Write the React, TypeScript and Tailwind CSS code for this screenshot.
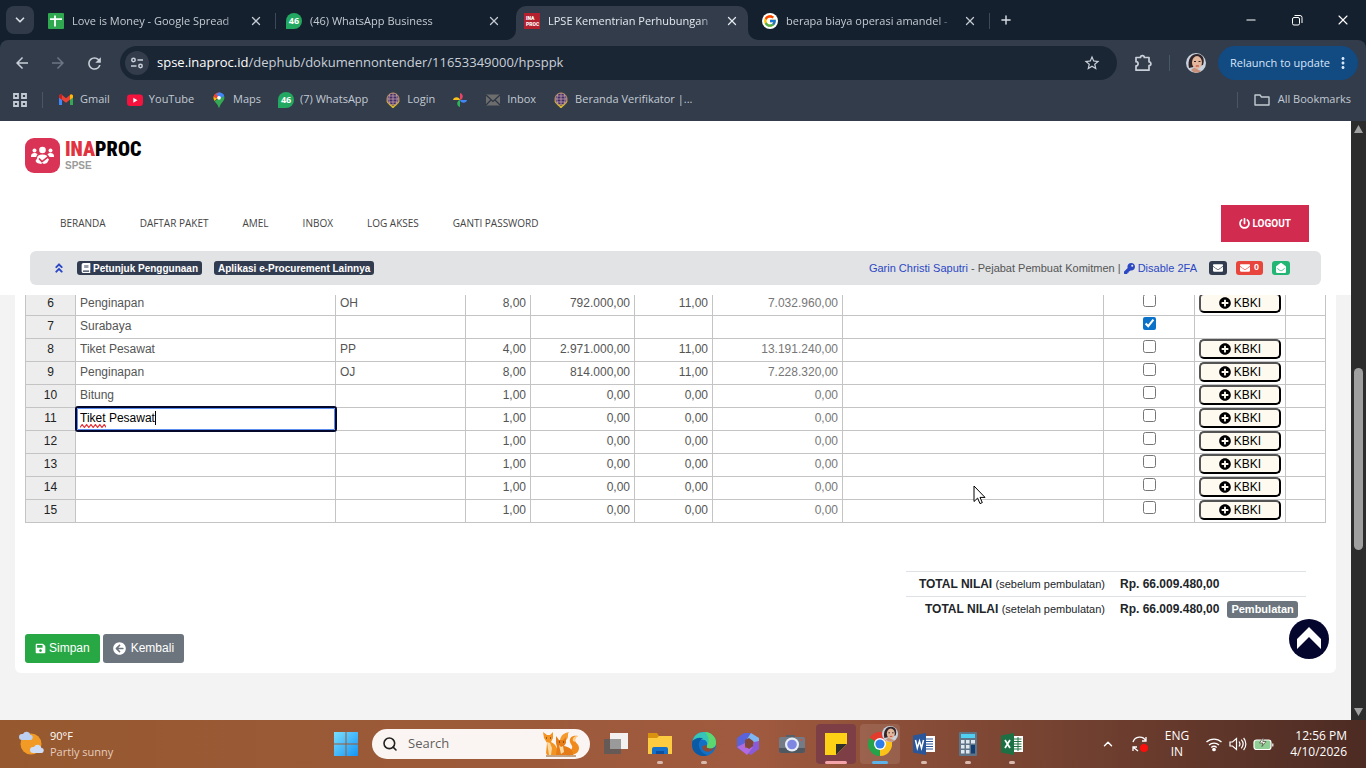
import { ChevronDown, ChevronUp, Minus, Plus, Search, X } from "lucide-react";
import {
  FaAngleDoubleUp,
  FaArrowCircleLeft,
  FaBook,
  FaEnvelope,
  FaEnvelopeOpen,
  FaKey,
  FaPlusCircle,
  FaPowerOff,
  FaSave,
} from "react-icons/fa";
import { FcGoogle } from "react-icons/fc";
import { MdArrowBack, MdArrowForward, MdMoreVert, MdRefresh, MdStarBorder } from "react-icons/md";
import type { ReactNode } from "react";

type Row = {
  no: number;
  name: string;
  unit?: string;
  qty?: string;
  price?: string;
  tax?: string;
  total?: string;
  checked?: boolean;
  editing?: boolean;
};

const rows: Row[] = [
  { no: 6, name: "Penginapan", unit: "OH", qty: "8,00", price: "792.000,00", tax: "11,00", total: "7.032.960,00" },
  { no: 7, name: "Surabaya", checked: true },
  { no: 8, name: "Tiket Pesawat", unit: "PP", qty: "4,00", price: "2.971.000,00", tax: "11,00", total: "13.191.240,00" },
  { no: 9, name: "Penginapan", unit: "OJ", qty: "8,00", price: "814.000,00", tax: "11,00", total: "7.228.320,00" },
  { no: 10, name: "Bitung", qty: "1,00", price: "0,00", tax: "0,00", total: "0,00" },
  { no: 11, name: "Tiket Pesawat", qty: "1,00", price: "0,00", tax: "0,00", total: "0,00", editing: true },
  { no: 12, name: "", qty: "1,00", price: "0,00", tax: "0,00", total: "0,00" },
  { no: 13, name: "", qty: "1,00", price: "0,00", tax: "0,00", total: "0,00" },
  { no: 14, name: "", qty: "1,00", price: "0,00", tax: "0,00", total: "0,00" },
  { no: 15, name: "", qty: "1,00", price: "0,00", tax: "0,00", total: "0,00" },
];

/* ---------- Favicons ---------- */

function SheetsIcon() {
  return (
    <svg viewBox="0 0 16 16" className="size-4 shrink-0">
      <rect width="16" height="16" rx="1" fill="#2fa84f" />
      <path d="M2 6.2h12M7 2.5v11" stroke="#fff" strokeWidth="1.8" />
    </svg>
  );
}

function WhatsAppBadge() {
  return (
    <span className="flex size-4 shrink-0 items-center justify-center rounded-full rounded-bl-sm bg-[#22a860] text-[9px] font-bold text-white">
      46
    </span>
  );
}

function InaprocIcon() {
  return (
    <span className="flex size-4 shrink-0 flex-col items-start justify-center overflow-hidden bg-[#b3202e] px-0.5 font-['Roboto',sans-serif] text-[5px] leading-[6px] font-black text-white">
      <span>INA</span>
      <span>PROC</span>
    </span>
  );
}

function GmailIcon() {
  return (
    <svg viewBox="0 0 16 16" className="size-4 shrink-0">
      <path d="M1 4v9h3V6z" fill="#4285f4" />
      <path d="M12 6v7h3V4z" fill="#34a853" />
      <path d="M1 4.2C1 2.6 2.8 2 4 3l4 3.2L12 3c1.2-1 3-.4 3 1.2V5.600L8 10.800 1 5.600z" fill="#ea4335" />
      <path d="M12 3c1.200-1 3-.4 3 1.200V5.600L12 7.800z" fill="#fbbc04" />
      <path d="M4 3C2.800 2 1 2.600 1 4.200v1.400l3 2.200z" fill="#c5221f" />
    </svg>
  );
}

function YoutubeIcon() {
  return (
    <svg viewBox="0 0 16 16" className="size-4 shrink-0">
      <rect y="2.500" width="16" height="11.500" rx="3" fill="#f5123d" />
      <path d="M6.300 5.700v5l4.200-2.500z" fill="#fff" />
    </svg>
  );
}

function MapsIcon() {
  return (
    <svg viewBox="0 0 16 16" className="size-4 shrink-0">
      <path d="M8 .5a5.500 5.500 0 0 1 5.200 3.700L8 9 5.500 4z" fill="#4285f4" />
      <path d="M3.800 2.500A5.500 5.500 0 0 0 3.500 9L9 4z" fill="#fbbc04" />
      <path d="M8 .5a5.500 5.500 0 0 0-5.400 4.500L6 6.500l3-4z" fill="#ea4335" />
      <path d="M8 .5a5.500 5.500 0 0 1 5.200 3.700L9 6 5 2z" fill="#4285f4" />
      <path d="M13.200 4.200C14.500 9 9.500 10.500 8.500 15.500h-1C7 12.500 5 11.500 3.500 9z" fill="#34a853" />
      <circle cx="8" cy="5.800" r="1.900" fill="#fff" />
    </svg>
  );
}

function GlobeIcon() {
  return (
    <svg viewBox="0 0 16 16" className="size-4 shrink-0" fill="none">
      <path d="M2 8.500C3 12 5.500 12.500 8 15.500c2.500-3 5-3.500 6-7" stroke="#d8b92c" strokeWidth="1.600" />
      <circle cx="8" cy="7" r="6" fill="#3d2c66" stroke="#c79a6b" />
      <path d="M2 7h12M3.500 4h9M3.500 10h9M8 1v12M5 2c-1.500 3-1.500 7 0 10M11 2c1.500 3 1.500 7 0 10" stroke="#c9a0a8" strokeWidth=".8" />
    </svg>
  );
}

function PhotosIcon() {
  return (
    <svg viewBox="0 0 16 16" className="size-4 shrink-0">
      <path d="M8 8V1a3.600 3.600 0 0 1 0 7" fill="#ea4365" />
      <path d="M8 8h7a3.600 3.600 0 0 1-7 0" fill="#4285f4" />
      <path d="M8 8v7a3.600 3.600 0 0 1 0-7" fill="#2fb457" />
      <path d="M8 8H1a3.600 3.600 0 0 1 7 0" fill="#fbc116" />
    </svg>
  );
}

function MailIcon() {
  return (
    <svg viewBox="0 0 16 16" className="size-4 shrink-0">
      <path d="M1 2.500h14v11H1z" fill="#6d6d6d" />
      <path d="M1 3l7 6.500L15 3M1 13l5-5M15 13l-5-5" fill="none" stroke="#2b3544" strokeWidth="1.200" />
    </svg>
  );
}

function Avatar() {
  return (
    <svg viewBox="0 0 20 20" className="size-5 shrink-0">
      <circle cx="10" cy="10" r="10" fill="#c9d3df" />
      <path d="M3 15C1 7 5 1 11 1s8 5 6 11z" fill="#33262a" />
      <ellipse cx="11" cy="9.500" rx="5" ry="6.500" fill="#e3b79c" />
      <path d="M5 17c2-2 3-3 6-1s4 1 4 2c-3 2.500-7 2.500-10-1" fill="#c9917a" />
      <path d="M8 8.500h2M12.500 8.500h2" stroke="#3a2620" strokeWidth="1.100" />
      <path d="M9.800 13h3" stroke="#c2453f" strokeWidth="1.200" />
    </svg>
  );
}

/* ---------- Browser ---------- */

function Tab({ icon, title, active }: { icon: ReactNode; title: string; active?: boolean }) {
  return (
    <div
      className={
        active
          ? "relative flex w-[232px] min-w-0 items-center gap-2 rounded-t-[10px] bg-[#323c4b] px-2 pb-1 text-[#e4e9ef]"
          : "flex w-[232px] min-w-0 items-center gap-2 px-2 pb-1 text-[#c3cad3]"
      }
    >
      {active && (
        <>
          <svg viewBox="0 0 10 10" className="absolute bottom-0 -left-2.5 size-2.5" fill="#323c4b">
            <path d="M10 0v10H0A10 10 0 0 0 10 0" />
          </svg>
          <svg viewBox="0 0 10 10" className="absolute -right-2.5 bottom-0 size-2.5" fill="#323c4b">
            <path d="M0 0v10h10A10 10 0 0 1 0 0" />
          </svg>
        </>
      )}
      {icon}
      <span className="flex-1 overflow-hidden mask-r-from-90% text-[11px] whitespace-nowrap">{title}</span>
      <button aria-label="Close tab" className="flex size-4 items-center justify-center">
        <X className="size-3.5" strokeWidth={2.200} />
      </button>
    </div>
  );
}

function TabLine({ hidden }: { hidden?: boolean }) {
  return (
    <div className="flex w-1.5 shrink-0 items-center justify-center pb-1">
      {!hidden && <div className="h-4 w-px bg-[#3d4858]" />}
    </div>
  );
}

function TabStrip() {
  return (
    <div className="flex h-10 bg-[#14202e] pt-1.5 text-[#d5dbe3]">
      <button aria-label="Search tabs" className="mx-1.5 flex size-7 shrink-0 items-center justify-center rounded-lg bg-[#303a49]">
        <ChevronDown className="size-3.5" strokeWidth={3} />
      </button>
      <div className="flex min-w-0">
        <Tab icon={<SheetsIcon />} title="Love is Money - Google Spread" />
        <TabLine />
        <Tab icon={<WhatsAppBadge />} title="(46) WhatsApp Business" />
        <TabLine hidden />
        <Tab icon={<InaprocIcon />} title="LPSE Kementrian Perhubungan" active />
        <TabLine hidden />
        <Tab
          icon={
            <span className="flex size-4 shrink-0 items-center justify-center rounded-full bg-white">
              <FcGoogle className="size-3.5" />
            </span>
          }
          title="berapa biaya operasi amandel -"
        />
        <TabLine />
      </div>
      <button aria-label="New tab" className="flex size-7 shrink-0 items-center justify-center">
        <Plus className="size-3.5" strokeWidth={2.500} />
      </button>
      <div className="-mt-1.5 ml-auto flex text-white">
        <button aria-label="Minimize" className="flex w-[46px] items-center justify-center">
          <Minus className="size-3.5" strokeWidth={2} />
        </button>
        <button aria-label="Restore" className="flex w-[46px] items-center justify-center">
          <svg viewBox="0 0 12 12" className="size-3" fill="none" stroke="currentColor">
            <rect x="1.500" y="3.500" width="7" height="7.500" rx="1.500" />
            <path d="M3.500 1.500H9a2 2 0 0 1 2 2V9" />
          </svg>
        </button>
        <button aria-label="Close" className="flex w-[46px] items-center justify-center">
          <X className="size-4" strokeWidth={1.600} />
        </button>
      </div>
    </div>
  );
}

function Toolbar() {
  return (
    <div className="flex h-[46px] items-center rounded-t-lg bg-[#323c4b] pr-2 pl-1 text-[#c9d0d9]">
      <button aria-label="Back" className="flex w-9 justify-center">
        <MdArrowBack className="size-[18px]" />
      </button>
      <button aria-label="Forward" className="flex w-9 justify-center text-[#6c7584]">
        <MdArrowForward className="size-[18px]" />
      </button>
      <button aria-label="Reload" className="flex w-9 justify-center">
        <MdRefresh className="size-[19px]" />
      </button>
      <div className="ml-2 flex h-[34px] flex-1 items-center rounded-full bg-[#1b2634] pr-4 pl-[5px]">
        <span className="flex size-6 items-center justify-center rounded-full bg-[#323c4b]">
          <svg viewBox="0 0 14 14" className="size-3.5" fill="none" stroke="currentColor" strokeWidth="1.500">
            <circle cx="3.500" cy="4" r="1.700" />
            <circle cx="10.500" cy="10" r="1.700" />
            <path d="M7.500 4H13M1 10h5.500" />
          </svg>
        </span>
        <p className="ml-2 flex-1 text-[13px] whitespace-nowrap">
          <span className="text-white">spse.inaproc.id</span>/dephub/dokumennontender/11653349000/hpsppk
        </p>
        <button aria-label="Bookmark this tab">
          <MdStarBorder className="size-[18px]" />
        </button>
      </div>
      <button aria-label="Extensions" className="ml-4 flex w-5 justify-center">
        <svg viewBox="0 0 18 18" className="size-[18px]" fill="none" stroke="currentColor" strokeWidth="1.700">
          <path
            d="M2 3.500h4.500a1.900 1.900 0 0 1 3.800 0H15V7.800a1.900 1.900 0 0 1 0 3.800V16.200H2v-4.300a2.100 2.100 0 0 0 0-4.200z"
            strokeLinejoin="round"
          />
        </svg>
      </button>
      <div className="mx-4 h-4 w-px bg-[#4a5566]" />
      <Avatar />
      <button className="ml-3 flex h-[34px] items-center gap-1 rounded-full bg-[#124a82] pr-1.5 pl-3 text-[11px] whitespace-nowrap text-[#d6e7fa]">
        Relaunch to update
        <MdMoreVert className="size-[18px]" />
      </button>
    </div>
  );
}

const bookmarks: { label: string; icon: ReactNode }[] = [
  { label: "Gmail", icon: <GmailIcon /> },
  { label: "YouTube", icon: <YoutubeIcon /> },
  { label: "Maps", icon: <MapsIcon /> },
  { label: "(7) WhatsApp", icon: <WhatsAppBadge /> },
  { label: "Login", icon: <GlobeIcon /> },
  { label: "", icon: <PhotosIcon /> },
  { label: "Inbox", icon: <MailIcon /> },
  { label: "Beranda Verifikator |...", icon: <GlobeIcon /> },
];

function BookmarksBar() {
  return (
    <div className="flex h-[35px] items-center bg-[#323c4b] pr-[15px] pb-2 pl-3 text-[11px] whitespace-nowrap text-[#c3cad3]">
      <button aria-label="Apps">
        <svg viewBox="0 0 16 16" className="size-4" fill="none" stroke="currentColor" strokeWidth="1.800">
          <path d="M2 2h4v4H2zM10 2h4v4h-4zM2 10h4v4H2zM10 10h4v4h-4z" />
        </svg>
      </button>
      <div className="mr-[15px] ml-3.5 h-4 w-px bg-[#4a5566]" />
      <nav className="flex gap-[17px]">
        {bookmarks.map((b) => (
          <a key={b.label} href="#" aria-label={b.label || "Photos"} className={b.label ? "flex items-center gap-1.5" : "flex items-center"}>
            {b.icon}
            {b.label}
          </a>
        ))}
      </nav>
      <div className="mr-4 ml-auto h-4 w-px bg-[#4a5566]" />
      <button className="flex items-center gap-2">
        <svg viewBox="0 0 16 16" className="size-4" fill="none" stroke="currentColor" strokeWidth="1.400">
          <path d="M1 13V3h5l1.500 2H15v8z" strokeLinejoin="round" />
        </svg>
        All Bookmarks
      </button>
    </div>
  );
}

/* ---------- Page ---------- */

const menu = ["BERANDA", "DAFTAR PAKET", "AMEL", "INBOX", "LOG AKSES", "GANTI PASSWORD"];

function PageHeader() {
  return (
    <header className="relative z-10 bg-white pt-[17px] pb-2.5">
      <a href="#" className="ml-[25px] flex h-[35px] w-fit gap-[5px]">
        <svg viewBox="0 0 35 35" className="size-[35px]">
          <rect width="35" height="35" rx="9" fill="#d93355" />
          <g fill="#fff">
            <circle cx="17.500" cy="12" r="3.300" />
            <circle cx="9.500" cy="12.500" r="2" />
            <circle cx="25.500" cy="12.500" r="2" />
            <path d="M6 18c0-2 1.500-3 3.500-3 1.500 0 2.500.5 3 1.500-.8.700-1.200 1.500-1.300 2.500H6zM29 18c0-2-1.500-3-3.500-3-1.500 0-2.500.5-3 1.500.8.700 1.200 1.500 1.300 2.500H29z" />
            <path d="M12 20.500c0-2.500 2-4 5.500-4s5.500 1.500 5.500 4l1 1-2 3.500-3 1-1.500-1-1.500 1-4-1-1.500-2z" />
          </g>
          <path d="M14 20.500l3 3.200 7-5.500" fill="none" stroke="#d93355" strokeWidth="1.700" />
        </svg>
        <span className="flex flex-col">
          <span className="font-['Roboto_Condensed','Roboto',sans-serif] text-[20px] leading-[23px] font-black text-black">
            <span className="text-[#e0323f]">INA</span>PROC
          </span>
          <span className="font-['Liberation_Sans',sans-serif] text-[10px] leading-[10px] font-bold text-[#9a9a9a]">SPSE</span>
        </span>
      </a>
      <div className="mt-8 flex items-center justify-between pr-[42px] pl-[60px]">
        <nav className="flex gap-[34px] text-[10px] whitespace-nowrap text-[#444]">
          {menu.map((m) => (
            <a key={m} href="#">
              {m}
            </a>
          ))}
        </nav>
        <button className="flex h-[37px] items-center gap-[3px] bg-[#d22b50] px-[18px] font-['Roboto',sans-serif] text-[10px] font-bold text-white">
          <FaPowerOff className="size-[11px]" />
          LOGOUT
        </button>
      </div>
      <div className="mx-[30px] mt-[9px] flex h-[34px] items-center rounded-md bg-[#e1e3e5] pr-[31px] pl-[23px] font-['Liberation_Sans',sans-serif] text-[11px] whitespace-nowrap text-[#555]">
        <a href="#" aria-label="Collapse" className="text-[#2c47c4]">
          <FaAngleDoubleUp className="size-3" />
        </a>
        <a href="#" className="ml-3 flex h-3.5 items-center gap-0.5 rounded-[3px] bg-[#323c50] px-1 text-[10px] font-bold text-white">
          <FaBook className="size-2.5" />
          Petunjuk Penggunaan
        </a>
        <a href="#" className="ml-3 flex h-3.5 items-center rounded-[3px] bg-[#323c50] px-1 text-[10px] font-bold text-white">
          Aplikasi e-Procurement Lainnya
        </a>
        <p className="ml-auto flex items-center whitespace-pre">
          <a href="#" className="text-[#2c47c4]">
            Garin Christi Saputri
          </a>
          {" - Pejabat Pembuat Komitmen | "}
          <a href="#" className="flex items-center gap-[3px] text-[#2c47c4]">
            <FaKey className="size-[11px]" />
            Disable 2FA
          </a>
        </p>
        <a href="#" aria-label="Pesan" className="ml-3 flex h-3.5 items-center rounded-[3px] bg-[#323c50] px-1 text-white">
          <FaEnvelope className="size-[10px]" />
        </a>
        <a href="#" className="ml-[9px] flex h-3.5 items-center gap-1 rounded-[3px] bg-[#e8453c] px-1 text-[9px] font-bold text-white">
          <FaEnvelope className="size-[10px]" />0
        </a>
        <a href="#" aria-label="Pesan terbaca" className="ml-[9px] flex h-3.5 items-center rounded-[3px] bg-[#22b573] px-1 text-white">
          <FaEnvelopeOpen className="size-[10px]" />
        </a>
      </div>
    </header>
  );
}

function ItemTable() {
  return (
    <table className="w-full table-fixed border-collapse text-[12px] leading-5 text-[#555] [&_td]:border [&_td]:border-[#c4c4c4] [&_td]:p-0 [&_td]:align-top [&_th]:border [&_th]:border-[#c4c4c4] [&_th]:p-0 [&_th]:align-top">
      <colgroup>
        <col className="w-[50px]" />
        <col className="w-[260px]" />
        <col className="w-[130px]" />
        <col className="w-[65px]" />
        <col className="w-[104px]" />
        <col className="w-[78px]" />
        <col className="w-[130px]" />
        <col className="w-[261px]" />
        <col className="w-[91px]" />
        <col className="w-[91px]" />
        <col className="w-[40px]" />
      </colgroup>
      <tbody>
        {rows.map((r) => (
          <tr key={r.no} className="h-[23px]">
            <th className="bg-[#ededed] font-normal text-[#222]">{r.no}</th>
            <td>
              {r.editing ? (
                <div className="relative h-[22px]">
                  <input
                    aria-label="Jenis Barang/Jasa"
                    defaultValue={r.name}
                    spellCheck={false}
                    className="absolute -top-0.5 -left-px z-[1] h-[26px] w-[calc(100%+3px)] rounded-[3px] border-2 border-[#04092c] bg-white pb-0.5 pl-[3px] text-black outline-1 -outline-offset-3 outline-[#5b8cf0]"
                  />
                  <svg viewBox="0 0 26 4" className="absolute bottom-0.5 left-1 z-[2] h-1 w-[26px]" fill="none" stroke="#e5323a" strokeWidth="1.200">
                    <path d="M0 3.500l2.200-3 2.200 3 2.200-3 2.200 3 2.200-3 2.200 3 2.200-3 2.200 3 2.200-3 2.200 3 2.200-3 2 3" />
                  </svg>
                  <div className="absolute top-[3px] left-[79px] z-[2] h-3.5 w-px bg-black" />
                </div>
              ) : (
                <span className="pl-1">{r.name}</span>
              )}
            </td>
            <td>
              <span className="pl-1">{r.unit}</span>
            </td>
            <td className="text-right">
              <span className="pr-1">{r.qty}</span>
            </td>
            <td className="text-right">
              <span className="pr-1">{r.price}</span>
            </td>
            <td className="text-right">
              <span className="pr-1">{r.tax}</span>
            </td>
            <td className="text-right text-[#777]">
              <span className="pr-1">{r.total}</span>
            </td>
            <td />
            <td>
              <input
                type="checkbox"
                aria-label={`Header baris ${r.no}`}
                defaultChecked={r.checked}
                className="mx-auto mt-px block size-[13px] accent-[#0a73c9]"
              />
            </td>
            <td>
              {r.qty && (
                <button className="mx-auto flex h-5 w-[82px] items-center justify-center gap-[3px] rounded-[5px] border-2 border-black bg-[#fffaf0] leading-4 text-black [border-style:outset]">
                  <FaPlusCircle className="size-3" />
                  KBKI
                </button>
              )}
            </td>
            <td />
          </tr>
        ))}
      </tbody>
    </table>
  );
}

function Totals() {
  return (
    <table className="mt-12 mr-5 ml-auto w-[400px] table-fixed text-[12px] leading-4 text-[#212529]">
      <tbody>
        <tr className="h-[25px] border-t border-[#dee2e6]">
          <th className="w-[199px] text-right font-bold">
            TOTAL NILAI <span className="text-[11px] font-normal">(sebelum pembulatan)</span>
          </th>
          <td className="pl-[15px] font-bold">Rp. 66.009.480,00</td>
        </tr>
        <tr className="h-[25px] border-t border-[#dee2e6]">
          <th className="w-[199px] text-right font-bold">
            TOTAL NILAI <span className="text-[11px] font-normal">(setelah pembulatan)</span>
          </th>
          <td className="pl-[15px] font-bold">
            <div className="flex items-center gap-2">
              Rp. 66.009.480,00
              <button className="h-[17px] rounded-[3px] bg-[#6c757d] px-1 text-[11px] text-white">Pembulatan</button>
            </div>
          </td>
        </tr>
      </tbody>
    </table>
  );
}

function ScrollBar() {
  return (
    <div className="flex w-[15px] shrink-0 flex-col items-center bg-[#2c2c2c] text-[#a0a0a0]">
      <svg viewBox="0 0 9 16" className="h-4 w-[9px]" fill="currentColor">
        <path d="M0 12l4.500-8L9 12z" />
      </svg>
      <div className="grow-3" />
      <div className="h-[182px] w-[9px] rounded-full bg-[#9f9f9f]" />
      <div className="grow-2" />
      <svg viewBox="0 0 9 16" className="h-4 w-[9px]" fill="currentColor">
        <path d="M0 4l4.500 8L9 4z" />
      </svg>
    </div>
  );
}

function Page() {
  return (
    <div className="flex min-h-0 flex-1">
      <div className="relative min-w-0 flex-1 overflow-hidden bg-[#f3f3f3]">
        <PageHeader />
        <main className="mx-[15px] -mt-[3px] rounded-b-md bg-white px-2.5 pb-2.5 font-['Liberation_Sans',sans-serif]">
          <ItemTable />
          <Totals />
          <div className="mt-3 flex gap-[3px] text-[12px] text-white">
            <button className="flex h-[29px] items-center gap-[3px] rounded-[3px] bg-[#28a745] px-2.5">
              <FaSave className="size-[11px]" />
              Simpan
            </button>
            <button className="flex h-[29px] items-center gap-[5px] rounded-[3px] bg-[#6c757d] px-2.5">
              <FaArrowCircleLeft className="size-[13px]" />
              Kembali
            </button>
          </div>
        </main>
        <button aria-label="Ke atas" className="absolute right-[22px] bottom-[61px] z-20 size-10">
          <svg viewBox="0 0 40 40" className="size-10">
            <circle cx="20" cy="20" r="20" fill="#04062e" />
            <path d="M20 8l12 12v10L20 18 8 30V20z" fill="#fff" />
          </svg>
        </button>
        {/* Mouse pointer */}
        <svg viewBox="0 0 13 20" className="absolute top-[364px] left-[973px] z-20 h-5 w-[13px]">
          <path d="M1 1v15.500l3.600-3.400L7 18.600l2.300-1L7 12.400h5z" fill="#fff" stroke="#000" />
        </svg>
      </div>
      <ScrollBar />
    </div>
  );
}

/* ---------- Taskbar ---------- */

function AppButton({ label, dot, className, children }: { label: string; dot?: string; className?: string; children: ReactNode }) {
  return (
    <button aria-label={label} className="flex h-12 w-11 shrink-0 items-center justify-center">
      <span className={`relative flex h-10 w-10 items-center justify-center rounded ${className ?? ""}`}>
        {children}
        {dot && <span className={`absolute bottom-0 h-[3px] rounded-full ${dot}`} />}
      </span>
    </button>
  );
}

function Taskbar() {
  return (
    <footer className="grid h-12 shrink-0 grid-cols-[1fr_auto_1fr] items-center bg-linear-to-r from-[#96592f] via-[#a05a3f] via-55% to-[#4c2b23] text-white">
      <div className="flex items-center gap-1.5 pl-[18px] text-[11px] leading-4">
        <svg viewBox="0 0 26 26" className="size-[26px]">
          <circle cx="13" cy="13" r="10.500" fill="#f29a26" />
          <path d="M4 9a3 3 0 0 1 0-6h1a4 4 0 0 1 7.500 1A2.500 2.500 0 0 1 12 9z" fill="#bcd0f2" />
          <path d="M15 22a3 3 0 0 1 0-6h1a4 4 0 0 1 7.500 1 2.500 2.500 0 0 1-.5 5z" fill="#cfddf6" />
        </svg>
        <p>
          90°F
          <span className="block text-[#e5cdbf]">Partly sunny</span>
        </p>
      </div>

      <div className="flex items-center pr-2">
        <AppButton label="Start">
          <svg viewBox="0 0 24 24" className="size-6">
            <defs>
              <linearGradient id="win" x1="0" y1="0" x2="1" y2="1">
                <stop offset="0" stopColor="#7adfff" />
                <stop offset="1" stopColor="#1494f5" />
              </linearGradient>
            </defs>
            <path d="M0 0h11.500v11.500H0zM12.500 0H24v11.500H12.500zM0 12.500h11.500V24H0zM12.500 12.500H24V24H12.500z" fill="url(#win)" />
          </svg>
        </AppButton>
        <label className="mx-1 flex h-[30px] w-[218px] items-center gap-2.5 overflow-hidden rounded-full bg-[#faf5f2] pr-2 pl-2.5">
          <Search className="size-4 shrink-0 text-[#222]" strokeWidth={2.400} />
          <input type="text" placeholder="Search" aria-label="Search" className="min-w-0 flex-1 text-[13px] outline-none placeholder:text-[#5f5f5f]" />
          {/* Pair of foxes */}
          <svg viewBox="0 0 40 26" className="h-[26px] w-10 shrink-0">
            <path d="M24 24c8 1 13-2 13-7 0-4-4-5-4-8 0-2 1-3 3-4-6-1-9 2-8 6 1 3 3 4 2 6-1 3-4 4-6 3z" fill="#f08a1c" />
            <path d="M36 5c-4 0-6 2-5 5l2 1c0-3 1-5 3-6z" fill="#fcd08a" />
            <path d="M18 9c1-5 4-7 9-8-2 2 0 4-2 7-1 2-3 3-5 3z" fill="#f59a2c" />
            <path d="M1 1l4 3h3l3-3v6l-2 4c5 2 7 7 7 13H5l-1-2 1-10-3-5z" fill="#f39322" />
            <path d="M14 5l3 4h4l3-3v6l-2 3c6 1 9 4 9 9H14l1-8-1-4z" fill="#e67c18" />
            <path d="M5 11l3 1 2 5-1 7H7zM17 14l2 2 2-1 1 6-3 2z" fill="#fbd9a3" />
            <path d="M4 7h1M8 7h1M17 11h1M21 11h1" stroke="#45220d" />
            <path d="M4 25h30" stroke="#8c5316" strokeWidth="1.200" />
          </svg>
        </label>
        <AppButton label="Task view">
          <svg viewBox="0 0 24 24" className="size-6">
            <path d="M6 1h18v16H6z" fill="#f3f1f0" />
            <path d="M0 7h17v15H0z" fill="#5a5a5a" opacity=".85" />
            <path d="M6 7h11v10H6z" fill="#9a9a9a" />
          </svg>
        </AppButton>
        <AppButton label="File Explorer" dot="w-1.5 bg-[#d9b9ad]">
          <svg viewBox="0 0 24 24" className="size-6">
            <path d="M0 1h9l2 3h13v7H0z" fill="#d9920f" />
            <path d="M0 6h9l2-2h13v18H0z" fill="#fccb3f" />
            <path d="M4 22v-5a2 2 0 0 1 2-2h12a2 2 0 0 1 2 2v5z" fill="#1470c8" />
            <path d="M8 19h8v3H8z" fill="#0d4f9c" />
          </svg>
        </AppButton>
        <AppButton label="Edge" dot="w-1.5 bg-[#d9b9ad]">
          <svg viewBox="0 0 26 26" className="size-[26px]">
            <circle cx="13" cy="13" r="12" fill="#1470c4" />
            <path d="M1.500 10C3 4 7.500 1 13 1c7 0 12 5 12 10.500 0 4-3 6-6 6s-4-1-3-3c1-3-1-6-5-6-4 0-8 .5-9.500 1.500" fill="#36c5b8" />
            <path d="M14 1c6.500.5 11 5 11 10.500 0 4-3 6-6 6s-4-1-3-3c3-4 2-9-2-13.500" fill="#5cd86e" />
            <path d="M1.500 10C5 6.500 9 6 12 7.500c-3 1-5 4-4 8 1 5 5 8 9 8.500C9 27 1 22 1 14z" fill="#0c59a4" />
            <path d="M16 14.500c-1 2 0 3 3 3 1.500 0 3.500-.5 4.500-1.500-2 5-8 6-11 3-2-2-1.500-6 3.500-4.500" fill="#8f4a35" />
          </svg>
        </AppButton>
        <AppButton label="Microsoft 365">
          <svg viewBox="0 0 24 24" className="size-6">
            <path d="M8 1h7L8 14v6L1 16V6z" fill="#5a63d8" />
            <path d="M15 1l8 5v7l-8-5-4-1z" fill="#7db6f2" />
            <path d="M23 9v8l-8 6-7-4 8-4 2-5z" fill="#8a5bd6" />
            <path d="M1 15l8-4v5l8-1-6 8z" fill="#b06be0" />
            <path d="M9 8l4-2 4 3v5l-4 3-4-3z" fill="#80463a" />
          </svg>
        </AppButton>
        <AppButton label="Camera">
          <svg viewBox="0 0 26 24" className="h-6 w-[26px]">
            <path d="M7 3h9v4H7z" fill="#57616c" />
            <rect y="5" width="26" height="16" rx="2" fill="#737c86" />
            <path d="M0 16h26v3a2 2 0 0 1-2 2H2a2 2 0 0 1-2-2z" fill="#4f5860" />
            <circle cx="13" cy="12.500" r="7" fill="#e9eef5" />
            <circle cx="13" cy="12.500" r="4.800" fill="#7d86e0" />
            <circle cx="22.500" cy="8" r="1" fill="#d94d3d" />
          </svg>
        </AppButton>
        <AppButton label="Sticky Notes" dot="w-[22px] bg-[#f4a3a8]" className="bg-[#7d3f45]">
          <svg viewBox="0 0 22 22" className="size-[22px]">
            <path d="M0 0h22v22H0z" fill="#fcd116" />
            <path d="M11 11h11L11 22z" fill="#2f2f2b" />
            <path d="M22 11v11H11z" fill="#7d3f45" />
          </svg>
        </AppButton>
        <AppButton label="Chrome" dot="w-4 bg-[#5cb3ea]" className="bg-white/10">
          <svg viewBox="0 0 24 24" className="size-6">
            <path d="M12 12L1.600 6a12 12 0 0 1 20.800 0z" fill="#e33b2e" />
            <path d="M12 12V24A12 12 0 0 1 1.600 6z" fill="#25a24a" />
            <path d="M12 12l10.400-6A12 12 0 0 1 12 24z" fill="#fbc21a" />
            <circle cx="12" cy="12" r="6" fill="#fff" />
            <circle cx="12" cy="12" r="4.600" fill="#2e7de9" />
          </svg>
          <span className="absolute top-0.5 right-0.5 [&>svg]:size-4">
            <Avatar />
          </span>
        </AppButton>
        <AppButton label="Word" dot="w-1.5 bg-[#d9b9ad]">
          <svg viewBox="0 0 22 22" className="size-[22px]">
            <path d="M11 3h11v16H11z" fill="#fff" />
            <path d="M13 6h7M13 8.500h7M13 11h7M13 13.500h7M13 16h7" stroke="#2b579a" />
            <path d="M0 2.500L13 0v22L0 19.500z" fill="#2b579a" />
            <path d="M2.500 7l1.800 8L6.500 8l2 7 2-8" fill="none" stroke="#fff" strokeWidth="1.500" />
          </svg>
        </AppButton>
        <AppButton label="Calculator" dot="w-1.5 bg-[#d9b9ad]">
          <svg viewBox="0 0 18 24" className="h-6 w-[18px]">
            <rect width="18" height="24" rx="1" fill="#5f7486" />
            <path d="M2 2h14v4H2z" fill="#4fd0f2" />
            <path d="M2 8h3.500v3.500H2zM7 8h3.500v3.500H7zM12 8h4v3.500h-4zM2 13h3.500v3.500H2zM7 13h3.500v3.500H7zM2 18h3.500v3.500H2zM7 18h3.500v3.500H7z" fill="#dfe7ee" />
            <path d="M12 13h4v8.500h-4z" fill="#123f73" />
          </svg>
        </AppButton>
        <AppButton label="Excel" dot="w-1.5 bg-[#d9b9ad]">
          <svg viewBox="0 0 22 22" className="size-[22px]">
            <path d="M11 3h11v16H11z" fill="#fff" />
            <path d="M13 6h7.500M13 8.500h7.500M13 11h7.500M13 13.500h7.500M13 16h7.500M17 4v14" stroke="#207245" />
            <path d="M0 2.500L13 0v22L0 19.500z" fill="#1d7044" />
            <path d="M4 7l5 8M9 7l-5 8" fill="none" stroke="#fff" strokeWidth="1.700" />
          </svg>
        </AppButton>
      </div>

      <div className="flex items-center justify-end pr-[19px] text-center text-[12px] leading-4 whitespace-nowrap">
        <ChevronUp className="size-3.5" strokeWidth={2.500} />
        <svg viewBox="0 0 18 18" className="ml-4 size-[18px]" fill="none" stroke="currentColor" strokeWidth="1.300">
          <path d="M2 7a7 7 0 0 1 13-1M15 2v4h-4M2 16v-4h4M2.500 12.500L7 16" />
          <circle cx="13" cy="13" r="4" fill="#f8100c" stroke="none" />
        </svg>
        <p className="ml-4">
          ENG
          <br />
          IN
        </p>
        <svg viewBox="0 0 18 16" className="ml-4 h-4 w-[18px]" fill="none" stroke="currentColor" strokeWidth="1.300">
          <path d="M1.500 6a11 11 0 0 1 15 0M4 9a7.500 7.500 0 0 1 10 0M6.300 11.500a4 4 0 0 1 5.400 0" />
          <circle cx="9" cy="13.500" r="1.200" fill="currentColor" />
        </svg>
        <svg viewBox="0 0 18 16" className="ml-1.5 h-4 w-[18px]" fill="none" stroke="currentColor" strokeWidth="1.200">
          <path d="M1 6h2.500L7.500 2.500v11L3.500 10H1zM10 5.500c1.200 1.500 1.200 3.500 0 5M12.300 3.700c2.200 2.500 2.200 6 0 8.600M14.600 2c3 3.500 3 8.500 0 12" />
        </svg>
        <svg viewBox="0 0 21 14" className="ml-1.5 h-3.5 w-[21px]" fill="none" stroke="currentColor" strokeWidth="1.200">
          <rect x="1" y="3" width="17" height="9.500" rx="2.500" fill="#8fcf96" />
          <path d="M19.800 6.500v3" />
          <path d="M10.500 0L6.500 6h3.500l-1 3.500L13 4.500H9.800z" fill="#fff" stroke="#3f2a22" strokeWidth=".6" />
        </svg>
        <p className="ml-4 text-right">
          12:56 PM
          <br />
          4/10/2026
        </p>
      </div>
    </footer>
  );
}

export default function App() {
  return (
    <div className="flex h-screen flex-col overflow-hidden bg-[#14202e] font-['Open_Sans','Noto_Sans',sans-serif]">
      <TabStrip />
      <Toolbar />
      <BookmarksBar />
      <Page />
      <Taskbar />
    </div>
  );
}
